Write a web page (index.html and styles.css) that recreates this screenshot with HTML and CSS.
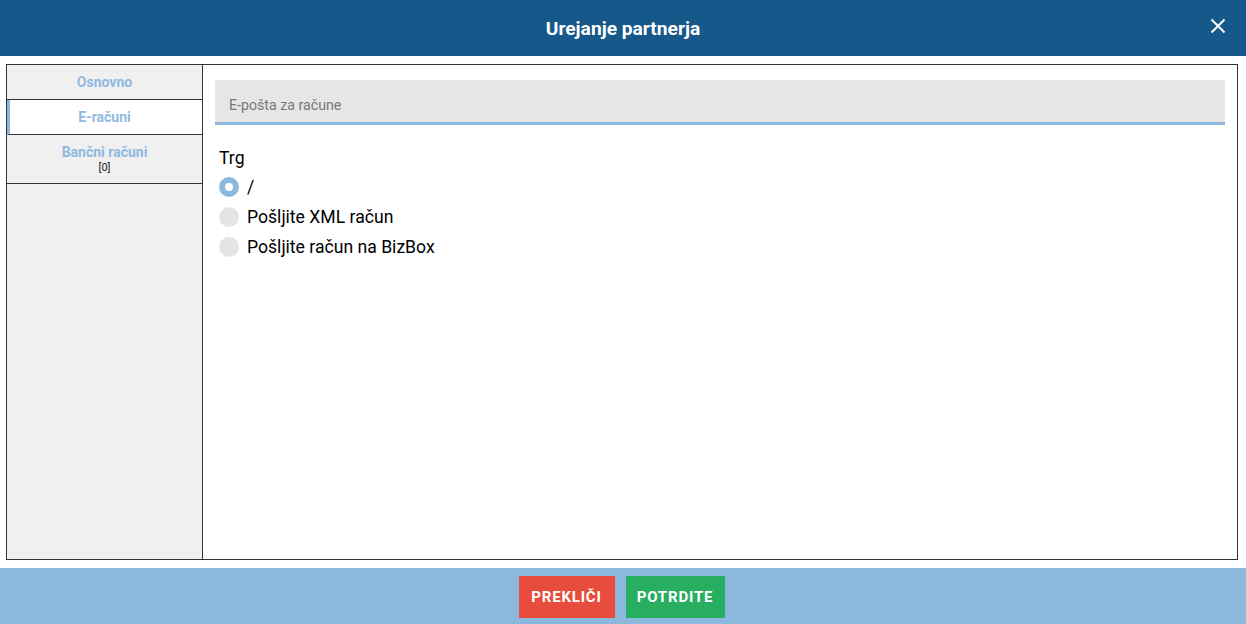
FILE: index.html
```html
<!DOCTYPE html>
<html lang="sl">
<head>
<meta charset="utf-8">
<title>Urejanje partnerja</title>
<link rel="stylesheet" href="styles.css">
</head>
<body>
<div class="dialog">
  <header class="head">
    <h1 class="title">Urejanje partnerja</h1>
    <button class="close" aria-label="Zapri">
      <svg width="16" height="16" viewBox="0 0 16 16"><path d="M1.5 1.5 L14.5 14.5 M14.5 1.5 L1.5 14.5" stroke="#fff" stroke-width="2" fill="none"/></svg>
    </button>
  </header>
  <main class="body">
    <div class="panel">
      <nav class="tabs">
        <div class="tab">Osnovno</div>
        <div class="tab active">E-računi</div>
        <div class="tab tall">Bančni računi<span class="count">[0]</span></div>
      </nav>
      <section class="content">
        <div class="field">E-pošta za račune</div>
        <div class="group-label">Trg</div>
        <div class="radios">
          <label class="radio"><span class="dot checked"></span>/</label>
          <label class="radio"><span class="dot"></span>Pošljite XML račun</label>
          <label class="radio"><span class="dot"></span>Pošljite račun na BizBox</label>
        </div>
      </section>
    </div>
  </main>
  <footer class="foot">
    <button class="btn cancel">Prekliči</button>
    <button class="btn ok">Potrdite</button>
  </footer>
</div>
</body>
</html>
```
FILE: styles.css
```css
* { box-sizing: border-box; }
html, body { margin: 0; padding: 0; background: #fff; }
body { font-family: Roboto, "Liberation Sans", sans-serif; color: #000; }
.dialog { width: 1246px; height: 624px; display: flex; flex-direction: column; }
.head {
  height: 56px; background: #16588a; position: relative;
  display: flex; align-items: center; justify-content: center;
}
.title { margin: 0; color: #fff; font-size: 19.2px; font-weight: 700; }
.close {
  position: absolute; right: 20px; top: 18px; width: 16px; height: 16px;
  padding: 0; border: 0; background: none; display: block;
}
.close svg { display: block; }
.body { padding: 8px 8px 8px 6px; height: 512px; }
.panel { height: 496px; border: 1px solid #333; display: flex; }
.tabs { width: 196px; background: #f0f0f0; border-right: 1px solid #333; flex: none; }
.tab {
  height: 35px; border-bottom: 1px solid #333; text-align: center;
  font-size: 14px; font-weight: 700; color: #8fb9e0; padding-top: 9px;
}
.tab.active { background: #fff; border-left: 3px solid #8cb8dd; padding-right: 3px; }
.tab.tall { height: 49px; padding-top: 9px; display: flex; flex-direction: column; align-items: center; }
.count { font-size: 11px; font-weight: 400; color: #222; margin-top: 1px; }
.content { flex: 1; padding: 15px 12px 0 12px; }
.field {
  height: 45px; background: #e6e6e6; border-bottom: 3px solid #8cb8dd;
  font-size: 14.2px; color: #777; padding: 17px 0 0 14px;
}
.group-label { font-size: 17.6px; margin: 22px 0 0 4px; line-height: 22px; height: 22px; }
.radios { display: flex; flex-direction: column; margin-left: 4px; margin-top: 3px; }
.radio { height: 30px; line-height: 30px; display: flex; align-items: center; font-size: 17.6px; flex: none; }
.dot {
  width: 20px; height: 20px; border-radius: 50%; background: #e4e4e4;
  margin-right: 8px; flex: none;
}
.dot.checked { background: #8cb8dd; position: relative; }
.dot.checked::after {
  content: ""; position: absolute; left: 6px; top: 6px; width: 8px; height: 8px;
  border-radius: 50%; background: #fff;
}
.foot {
  height: 56px; background: #8cb8dd; display: flex; justify-content: center;
  align-items: flex-start; gap: 11px; padding: 8px 3px 0 0;
}
.btn {
  height: 42px; border: 0; color: #fff; font-family: Roboto, "Liberation Sans", sans-serif;
  font-size: 15px; font-weight: 700; text-transform: uppercase; letter-spacing: 0.8px;
  padding: 0;
}
.cancel { background: #e74c3c; width: 96px; }
.ok { background: #27ae60; width: 99px; }
```
